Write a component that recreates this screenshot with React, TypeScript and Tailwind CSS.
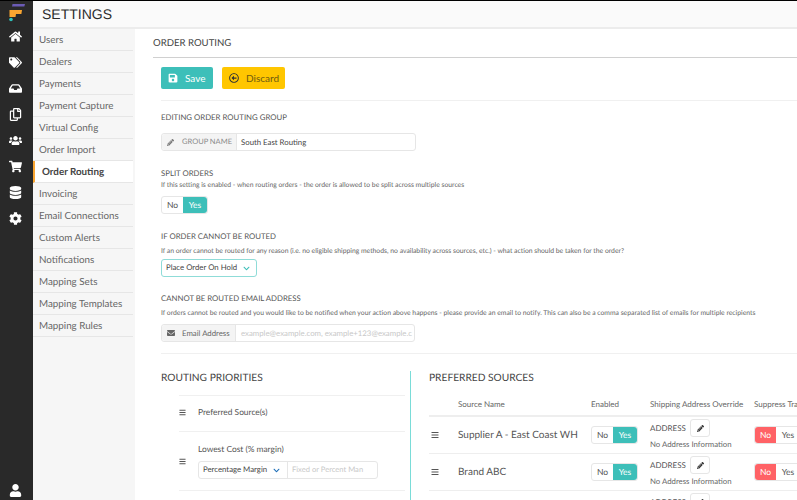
import { FaHome, FaTags, FaInbox, FaRegCopy, FaUsers, FaShoppingCart, FaDatabase, FaCog, FaUser, FaSave, FaRegArrowAltCircleLeft, FaPencilAlt, FaEnvelope, FaBars, FaChevronDown } from 'react-icons/fa';

const NAV = ['Users', 'Dealers', 'Payments', 'Payment Capture', 'Virtual Config', 'Order Import', 'Order Routing', 'Invoicing', 'Email Connections', 'Custom Alerts', 'Notifications', 'Mapping Sets', 'Mapping Templates', 'Mapping Rules'];

const RAIL = [FaHome, FaTags, FaInbox, FaRegCopy, FaUsers, FaShoppingCart, FaDatabase, FaCog];

const YesNo = ({ red }: { red?: boolean }) => (
    <div className="flex h-[18px] w-[47px] shrink-0 rounded-[3px] border border-[#e6e6e6] text-[8.5px] leading-[16px] text-center">
        <span className={red ? 'w-[22px] rounded-l-[3px] bg-[#ff6266] text-white' : 'w-[22px] text-[#555]'}>No</span>
        <span className={red ? 'w-[25px] text-[#555]' : 'w-[25px] rounded-r-[3px] bg-[#3dbfb9] text-white'}>Yes</span>
    </div>
);

const SourceRow = ({ name }: { name: string }) => (
    <div className="flex h-[37px] items-center border-b border-[#eeeeee]">
        <FaBars className="ml-[2px] h-[8px] w-[8px] text-[#555]" />
        <span className="ml-[19px] w-[133px] whitespace-nowrap text-[10px] text-[#555]">{name}</span>
        <YesNo />
        <div className="ml-[12px] w-[104px]">
            <div className="flex items-center">
                <span className="w-[40px] text-[8px] text-[#555]">ADDRESS</span>
                <span className="flex h-[18px] w-[20px] items-center justify-center rounded-[3px] border border-[#e6e6e6]">
                    <FaPencilAlt className="h-[7px] w-[7px] text-[#333]" />
                </span>
            </div>
            <div className="mt-[1px] text-[7.8px] leading-[13px] text-[#666] whitespace-nowrap">No Address Information</div>
        </div>
        <YesNo red />
    </div>
);

const App = () => {
    return (
        <div className="flex h-[500px] w-[797px] overflow-hidden bg-white text-[#555] antialiased [text-rendering:geometricPrecision]" style={{ fontFamily: 'Lato, "Open Sans", sans-serif' }}>
            {/* icon rail */}
            <div className="flex h-full w-[33px] shrink-0 flex-col items-center gap-[13px] border-t border-black bg-[#292929] pr-[2px] text-white">
                <svg width="16" height="18" viewBox="0 0 16 18" className="mt-[3px] mb-[-5px] ml-[3px] shrink-0">
                    <path d="M3.5 0 L16 0 L15.3 2.5 L3 2.5 Z" fill="#6b5bb5" />
                    <path d="M0.5 6 L13 6 L12.4 10 L0.5 10 Z" fill="#f9a531" />
                    <path d="M0.5 10 L7 10 L6.5 13 L0.5 13 Z" fill="#f9a531" />
                    <circle cx="2" cy="15.5" r="1.8" fill="#2fc4bd" />
                </svg>
                {RAIL.map((Icon, i) => (
                    <Icon key={i} className="h-[13px] w-[13px] shrink-0" />
                ))}
                <FaUser className="mt-auto mb-[3px] h-[13px] w-[13px] shrink-0" />
            </div>

            <div className="flex min-w-0 flex-1 flex-col">
                {/* header */}
                <div className="h-[29px] shrink-0 border-t border-black border-b-2 border-b-[#ececec] bg-[#fafafa] pl-[9px] text-[14px] leading-[26px] text-[#2b2b2b]" style={{ fontFamily: '"Liberation Sans", sans-serif' }}>
                    SETTINGS
                </div>

                <div className="flex min-h-0 flex-1">
                    {/* settings nav */}
                    <div className="w-[102px] shrink-0 bg-[#f6f6f6] pr-[2px]">
                        {NAV.map((item) => item === 'Order Routing' ? (
                            <div key={item} className="h-[22px] border-l-2 border-b border-l-[#f9a531] border-b-[#e6e6e6] bg-white pl-[7px] text-[9.8px] font-bold leading-[22px] text-[#444]">{item}</div>
                        ) : (
                            <div key={item} className="h-[22px] border-b border-[#e6e6e6] pl-[6px] text-[9.8px] leading-[22px] text-[#666]">{item}</div>
                        ))}
                    </div>

                    {/* main */}
                    <div className="min-w-0 flex-1 overflow-hidden pl-[18px]">
                        <div className="h-[29px] border-b border-[#d0d0d0] pt-[8px] text-[9.6px] leading-[14px] text-[#444]">ORDER ROUTING</div>
                        <div className="pl-[8px]">
                            <div className="mt-[9px] flex gap-[9px]">
                                <button className="flex h-[22px] w-[52px] items-center rounded-[2px] bg-[#3dbfb9] pl-[7px] text-[10px] text-white">
                                    <FaSave className="h-[10px] w-[10px] shrink-0" /><span className="ml-[7px]">Save</span>
                                </button>
                                <button className="flex h-[22px] w-[63px] items-center rounded-[2px] bg-[#ffc600] pl-[7px] text-[10px] text-[#6e5a10]">
                                    <FaRegArrowAltCircleLeft className="h-[10px] w-[10px] shrink-0 text-[#333]" /><span className="ml-[7px]">Discard</span>
                                </button>
                            </div>
                            <div className="mt-[11px] h-px bg-[#f0f0f0]" />

                            <div className="mt-[10px] text-[7.8px] leading-[12px] text-[#555]">EDITING ORDER ROUTING GROUP</div>
                            <div className="mt-[10px] flex h-[18px] w-[255px] rounded-[3px] border border-[#e6e6e6] text-[7.8px] leading-[16px]">
                                <div className="flex w-[75px] shrink-0 items-center whitespace-nowrap rounded-l-[3px] border-r border-[#e6e6e6] bg-[#f4f4f4] pl-[5px] text-[7.5px] text-[#888]">
                                    <FaPencilAlt className="h-[7px] w-[7px] shrink-0 text-[#777]" /><span className="ml-[8px]">GROUP NAME</span>
                                </div>
                                <div className="pl-[4px] text-[#444]">South East Routing</div>
                            </div>

                            <div className="mt-[16px] text-[7.8px] leading-[12px]">SPLIT ORDERS</div>
                            <div className="mt-[1px] text-[6.8px] leading-[10px] text-[#666] whitespace-nowrap">If this setting is enabled - when routing orders - the order is allowed to be split across multiple sources</div>
                            <div className="mt-[6px]"><YesNo /></div>

                            <div className="mt-[16px] text-[7.8px] leading-[12px]">IF ORDER CANNOT BE ROUTED</div>
                            <div className="mt-[4px] text-[6.8px] leading-[10px] text-[#666] whitespace-nowrap">If an order cannot be routed for any reason (i.e. no eligible shipping methods, no availability across sources, etc.) - what action should be taken for the order?</div>
                            <div className="mt-[3px] flex h-[18px] w-[96px] items-center whitespace-nowrap rounded-[3px] border border-[#8fdcd8] pl-[4px] text-[7.8px] text-[#444]">
                                Place Order On Hold<FaChevronDown className="ml-[6px] h-[7px] w-[7px] shrink-0 text-[#3dbfb9]" />
                            </div>

                            <div className="mt-[15px] text-[7.8px] leading-[12px]">CANNOT BE ROUTED EMAIL ADDRESS</div>
                            <div className="mt-[4px] text-[6.8px] leading-[10px] text-[#666] whitespace-nowrap">If orders cannot be routed and you would like to be notified when your action above happens - please provide an email to notify. This can also be a comma separated list of emails for multiple recipients</div>
                            <div className="mt-[6px] flex h-[18px] w-[254px] rounded-[3px] border border-[#e6e6e6] text-[7.8px] leading-[16px]">
                                <div className="flex w-[74px] shrink-0 items-center whitespace-nowrap rounded-l-[3px] border-r border-[#e6e6e6] bg-[#f4f4f4] pl-[5px] text-[#666]">
                                    <FaEnvelope className="h-[8px] w-[8px] shrink-0 text-[#666]" /><span className="ml-[7px]">Email Address</span>
                                </div>
                                <div className="overflow-hidden whitespace-nowrap pl-[5px] pr-[3px] text-[#c8c8c8]">example@example.com, example+123@example.c</div>
                            </div>
                            <div className="mt-[11px] h-px bg-[#f0f0f0]" />

                            {/* two columns */}
                            <div className="mt-[17px] flex">
                                <div className="w-[250px] shrink-0 border-r border-r-[#7adcd8] pr-[5px]">
                                    <div className="text-[10.2px] leading-[14px] text-[#444]">ROUTING PRIORITIES</div>
                                    <div className="ml-[18px] mt-[10px] border-t border-[#f0f0f0]">
                                        <div className="flex h-[36px] items-center border-b border-[#f0f0f0] pb-[2px]">
                                            <FaBars className="h-[7px] w-[7px] shrink-0 text-[#555]" />
                                            <span className="ml-[12px] text-[8.4px] text-[#555]">Preferred Source(s)</span>
                                        </div>
                                        <div className="flex h-[59px] items-center border-b border-[#f0f0f0]">
                                            <FaBars className="h-[7px] w-[7px] shrink-0 text-[#555]" />
                                            <div className="ml-[12px]">
                                                <div className="text-[8.4px] leading-[12px] text-[#555]">Lowest Cost (% margin)</div>
                                                <div className="mt-[6px] flex h-[18px] w-[180px] items-center whitespace-nowrap rounded-[3px] border border-[#e6e6e6] text-[7.8px]">
                                                    <div className="flex h-full w-[89px] shrink-0 items-center border-r border-[#e6e6e6] pl-[4px] text-[#444]">
                                                        Percentage Margin<FaChevronDown className="ml-[6px] h-[7px] w-[7px] shrink-0 text-[#1e6fb8]" />
                                                    </div>
                                                    <span className="pl-[4px] text-[7.6px] text-[#c8c8c8]">Fixed or Percent Man</span>
                                                </div>
                                            </div>
                                        </div>
                                    </div>
                                </div>
                                <div className="ml-[18px] w-[400px] shrink-0">
                                    <div className="text-[10.2px] leading-[14px] text-[#444]">PREFERRED SOURCES</div>
                                    <div className="mt-[13px] flex h-[19px] border-b-2 border-[#eeeeee] text-[8px] leading-[12px] text-[#666]">
                                        <span className="ml-[29px] w-[133px]">Source Name</span>
                                        <span className="w-[59px]">Enabled</span>
                                        <span className="w-[104px] whitespace-nowrap">Shipping Address Override</span>
                                        <span className="whitespace-nowrap">Suppress Tracking</span>
                                    </div>
                                    <SourceRow name="Supplier A - East Coast WH" />
                                    <SourceRow name="Brand ABC" />
                                    <SourceRow name="Brand XYZ" />
                                </div>
                            </div>
                        </div>
                    </div>
                </div>
            </div>
        </div>
    );
};

export default App;
